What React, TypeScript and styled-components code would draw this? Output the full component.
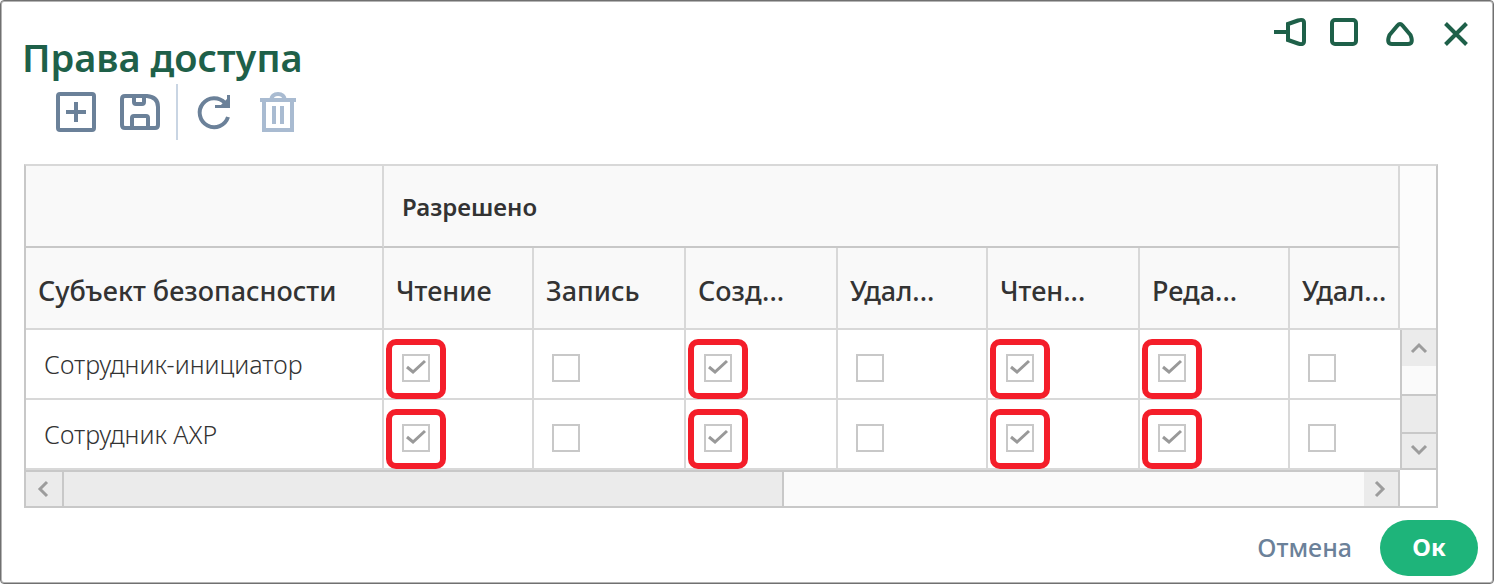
import React, { useState } from 'react';
import styled, { createGlobalStyle, css } from 'styled-components';

const color = {
  title: '#1e6049',
  icon: '#6b8199',
  iconMuted: '#a9bbd1',
  line: '#d8d8d8',
  lineStrong: '#c8c8c8',
  head: '#f9f9f9',
  scroll: '#ebebeb',
  accent: '#1eb47a',
  mark: '#f41e2a',
};

const GlobalStyle = createGlobalStyle`
  *, *::before, *::after { box-sizing: border-box; }
  body { margin: 0; background: #fff; font-family: 'Noto Sans', sans-serif; color: #333; }
  button { margin: 0; padding: 0; border: 0; background: none; font-family: inherit; cursor: pointer; }
`;

const Dialog = styled.section`
  display: flex;
  flex-direction: column;
  border: 1px solid #707070;
  border-radius: 4px;
  padding: 1px 1px 7px;
  box-shadow: inset 0 0 0 1px #b4b4b4;
  background: #fff;
`;

const Header = styled.header`
  display: flex;
  justify-content: space-between;
  align-items: flex-start;
  padding: 14px 20px 0;
`;

const Title = styled.h1`
  margin: 19px 0 0;
  font-size: 38px;
  line-height: 44px;
  font-weight: 600;
  color: ${color.title};
`;

const WindowControls = styled.div`
  display: flex;
  gap: 24px;
`;

const IconButton = styled.button<{ $size: number; $color: string }>`
  display: grid;
  place-items: center;
  width: ${p => p.$size}px;
  height: ${p => p.$size}px;
  color: ${p => p.$color};
  svg { display: block; overflow: visible; fill: none; stroke: currentColor; stroke-width: 4; }
`;

const Toolbar = styled.div`
  display: flex;
  align-items: center;
  height: 56px;
  margin-top: 5px;
  padding-left: 54px;
`;

const ToolGroup = styled.div`
  display: flex;
  gap: 24px;
`;

const Divider = styled.span`
  width: 2px;
  height: 56px;
  margin: 0 16px;
  background: #c9d5e3;
`;

const Grid = styled.div`
  display: grid;
  grid-template-columns: minmax(0, 1fr) 36px;
  grid-template-rows: auto 36px;
  margin: 24px 54px 0 22px;
  border: 2px solid ${color.lineStrong};
  border-top-color: ${color.line};
`;

const Table = styled.table`
  width: 100%;
  table-layout: fixed;
  border-collapse: separate;
  border-spacing: 0;
`;

const Col = styled.col<{ $width?: number }>`
  ${p => p.$width && css`width: ${p.$width}px;`}
`;

const HeadCell = styled.th<{ $group?: boolean }>`
  height: 82px;
  padding: ${p => (p.$group ? '2px 0 0 18px' : '6px 0 0 12px')};
  border-right: 2px solid ${color.line};
  border-bottom: 2px solid ${p => (p.$group ? color.lineStrong : color.line)};
  background: ${color.head};
  font-size: ${p => (p.$group ? 24 : 27)}px;
  font-weight: ${p => (p.$group ? 600 : 500)};
  line-height: 32px;
  text-align: left;
  white-space: nowrap;
  overflow: hidden;
`;

const SubjectCell = styled.th`
  height: 70px;
  padding: 0 0 0 18px;
  border-right: 2px solid ${color.line};
  border-bottom: 2px solid ${color.line};
  font-size: 25px;
  font-weight: 300;
  line-height: 32px;
  text-align: left;
  white-space: nowrap;
`;

const CheckCell = styled.td`
  height: 70px;
  padding: 24px 0 0 18px;
  border-right: 2px solid ${color.line};
  border-bottom: 2px solid ${color.line};
  vertical-align: top;
  &:last-child { border-right: 0; }
`;

const CheckLabel = styled.label<{ $marked: boolean }>`
  position: relative;
  display: grid;
  width: 28px;
  height: 28px;
  > * { grid-area: 1 / 1; }
  svg { fill: none; stroke: #999; stroke-width: 3; pointer-events: none; }
  ${p => p.$marked && css`
    &::after {
      content: '';
      position: absolute;
      inset: -15px -16px -17px;
      border: 6px solid ${color.mark};
      border-radius: 10px;
      pointer-events: none;
    }
  `}
`;

const CheckInput = styled.input`
  appearance: none;
  width: 28px;
  height: 28px;
  margin: 0;
  border: 2px solid ${color.lineStrong};
  background: #fff;
`;

const Side = styled.div`
  display: flex;
  flex-direction: column;
`;

const SideHead = styled.div`
  height: 164px;
  border-bottom: 2px solid ${color.line};
  background: #fcfcfc;
`;

const VScroll = styled.div`
  flex: 1;
  display: flex;
  flex-direction: column;
  border-left: 2px solid ${color.lineStrong};
  border-bottom: 2px solid ${color.lineStrong};
  background: #fafafa;
`;

const HScroll = styled.div`
  display: flex;
  border-top: 2px solid ${color.lineStrong};
  border-right: 2px solid ${color.lineStrong};
  background: #fafafa;
`;

const ScrollButton = styled.button`
  display: grid;
  place-items: center;
  flex: 0 0 auto;
  width: 34px;
  height: 34px;
  background: ${color.scroll};
  svg { fill: none; stroke: #9c9c9c; stroke-width: 3; }
  ${VScroll} > &:first-child { height: 36px; }
  ${HScroll} > &:first-child { width: 36px; }
`;

const VThumb = styled.div`
  height: 40px;
  margin-top: auto;
  border: solid ${color.lineStrong};
  border-width: 2px 0;
  background: ${color.scroll};
`;

const HThumb = styled.div`
  width: 722px;
  margin-right: auto;
  border: solid ${color.lineStrong};
  border-width: 0 2px;
  background: ${color.scroll};
`;

const Footer = styled.footer`
  display: flex;
  justify-content: flex-end;
  align-items: center;
  gap: 28px;
  padding: 12px 14px 0;
`;

const CancelButton = styled.button`
  padding-bottom: 2px;
  font-size: 25px;
  font-weight: 500;
  line-height: 32px;
  color: ${color.icon};
`;

const OkButton = styled.button`
  width: 98px;
  height: 56px;
  padding-bottom: 2px;
  border-radius: 28px;
  background: ${color.accent};
  font-size: 24px;
  font-weight: 700;
  line-height: 32px;
  color: #fff;
`;

const columns = ['Чтение', 'Запись', 'Созд...', 'Удал...', 'Чтен...', 'Реда...', 'Удал...'];
const widths = [358, 150, 152, 152, 150, 152, 150, undefined];
const subjects = ['Сотрудник-инициатор', 'Сотрудник АХР'];
const granted = [true, false, true, false, true, true, false];

const arrows = {
  up: 'M2 13 L9 6 L16 13',
  down: 'M2 4 L9 11 L16 4',
  left: 'M12 2 L5 9 L12 16',
  right: 'M4 2 L11 9 L4 16',
};

function Arrow({ to, label }: { to: keyof typeof arrows; label: string }) {
  return (
    <ScrollButton type="button" aria-label={label}>
      <svg width="18" height="18"><path d={arrows[to]} /></svg>
    </ScrollButton>
  );
}

function Permission({ label, initial }: { label: string; initial: boolean }) {
  const [on, setOn] = useState(initial);
  return (
    <CheckCell>
      <CheckLabel $marked={initial}>
        <CheckInput type="checkbox" aria-label={label} checked={on} onChange={() => setOn(!on)} />
        {on && <svg width="28" height="28"><path d="M5 13L11 18L23 7" /></svg>}
      </CheckLabel>
    </CheckCell>
  );
}

export default function App() {
  return (
    <>
      <GlobalStyle />
      <Dialog role="dialog" aria-labelledby="dialog-title">
        <Header>
          <Title id="dialog-title">Права доступа</Title>
          <WindowControls>
            <IconButton type="button" aria-label="Закрепить" $size={32} $color={color.title}>
              <svg width="32" height="32"><path d="M2 16H16M16 8L26 4.500Q32 2.500 32 7V25Q32 29.500 26 27.500L16 24Z" /></svg>
            </IconButton>
            <IconButton type="button" aria-label="Развернуть" $size={32} $color={color.title}>
              <svg width="32" height="32"><rect x="4" y="4" width="24" height="24" rx="3" /></svg>
            </IconButton>
            <IconButton type="button" aria-label="Свернуть" $size={32} $color={color.title}>
              <svg width="32" height="32"><path d="M13.500 9.500Q16 6.500 18.500 9.500L26.500 19Q30 28 24 28H8Q2 28 5.500 19Z" /></svg>
            </IconButton>
            <IconButton type="button" aria-label="Закрыть" $size={32} $color={color.title}>
              <svg width="32" height="32"><path d="M5.500 7.500L26.500 28.500M26.500 7.500L5.500 28.500" /></svg>
            </IconButton>
          </WindowControls>
        </Header>
        <Toolbar>
          <ToolGroup>
            <IconButton type="button" aria-label="Добавить" $size={40} $color={color.icon}>
              <svg width="40" height="40"><rect x="2" y="2" width="36" height="36" rx="2" /><path d="M10 20H30M20 10V30" /></svg>
            </IconButton>
            <IconButton type="button" aria-label="Сохранить" $size={40} $color={color.icon}>
              <svg width="40" height="40"><path d="M5 4H27Q38 5 38 15V33Q38 36 35 36H5Q2 36 2 33V7Q2 4 5 4ZM14 4V10Q14 12 16 12H22Q24 12 24 10V4M12 36V26Q12 24 14 24H26Q28 24 28 26V36" /></svg>
            </IconButton>
          </ToolGroup>
          <Divider />
          <ToolGroup>
            <IconButton type="button" aria-label="Обновить" $size={40} $color={color.icon}>
              <svg width="40" height="40"><path d="M34 25A14.500 14.500 0 1 1 31 11L33 13" /><path d="M34.500 3V14.500H21M34 8L28 14" strokeWidth="3" /></svg>
            </IconButton>
            <IconButton type="button" aria-label="Удалить" $size={40} $color={color.iconMuted}>
              <svg width="40" height="40"><path d="M2 8H38M6 8V38H34V8M16 14V32M24 14V32M13 8Q14 2 20 2T27 8" /></svg>
            </IconButton>
          </ToolGroup>
        </Toolbar>
        <Grid>
          <Table>
            <colgroup>{widths.map((w, i) => <Col key={i} $width={w} />)}</colgroup>
            <thead>
              <tr>
                <HeadCell $group />
                <HeadCell $group colSpan={7} scope="colgroup">Разрешено</HeadCell>
              </tr>
              <tr>
                <HeadCell scope="col">Субъект безопасности</HeadCell>
                {columns.map((c, i) => <HeadCell key={i} scope="col">{c}</HeadCell>)}
              </tr>
            </thead>
            <tbody>
              {subjects.map(s => (
                <tr key={s}>
                  <SubjectCell scope="row">{s}</SubjectCell>
                  {columns.map((c, i) => <Permission key={i} label={`${s}: ${c}`} initial={granted[i]} />)}
                </tr>
              ))}
            </tbody>
          </Table>
          <Side>
            <SideHead />
            <VScroll>
              <Arrow to="up" label="Вверх" />
              <VThumb />
              <Arrow to="down" label="Вниз" />
            </VScroll>
          </Side>
          <HScroll>
            <Arrow to="left" label="Влево" />
            <HThumb />
            <Arrow to="right" label="Вправо" />
          </HScroll>
        </Grid>
        <Footer>
          <CancelButton type="button">Отмена</CancelButton>
          <OkButton type="button">Ок</OkButton>
        </Footer>
      </Dialog>
    </>
  );
}
